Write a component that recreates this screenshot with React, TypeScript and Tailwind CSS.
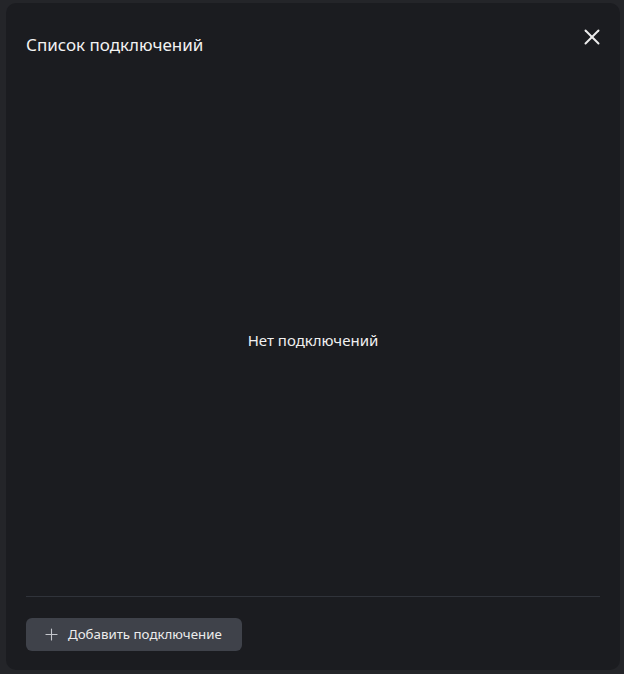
import { X, Plus } from "lucide-react";

export default function App() {
  return (
    <div className="h-[674px] w-[624px] bg-[#242529] pt-[3px] pl-[6px] pr-[4px] pb-[4px] font-['Noto_Sans',sans-serif]">
      <div className="flex h-full flex-col rounded-[10px] bg-[#1b1c20]">
        {/* Header */}
        <div className="flex items-start justify-between pl-5 pr-[15px] pt-[30px]">
          <h2 className="text-[17px] leading-6 text-[#f2f2f2]">Список подключений</h2>
          <button className="-mt-[9px] text-[#ececec]" aria-label="Закрыть">
            <X className="h-[26px] w-[26px]" strokeWidth={1.8} />
          </button>
        </div>

        {/* Body */}
        <div className="flex flex-1 items-center justify-center pt-[28px]">
          <p className="text-[15px] text-[#f0f0f0]">Нет подключений</p>
        </div>

        {/* Footer */}
        <div className="px-5 pb-[19px]">
          <div className="mb-[21px] h-px bg-[#30333a]" />
          <button className="flex h-[33px] items-center gap-[7px] rounded-md bg-[#3f424a] pl-[16px] pr-[20px] text-[13.3px] text-[#ececec]">
            <Plus className="h-[19px] w-[19px] text-[#c4c6cc]" strokeWidth={1.4} />
            Добавить подключение
          </button>
        </div>
      </div>
    </div>
  );
}
